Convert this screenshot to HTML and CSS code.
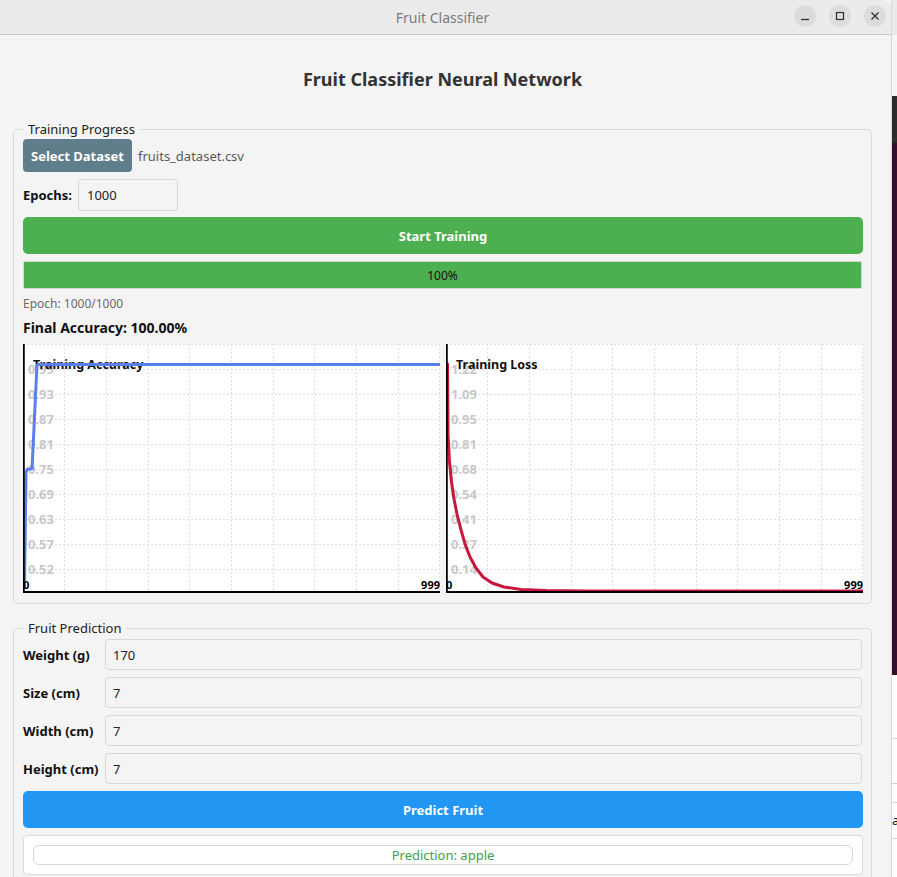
FILE: index.html
```html
<!DOCTYPE html>
<html>
<head>
<meta charset="utf-8">
<title>Fruit Classifier</title>
<link rel="stylesheet" href="styles.css">
</head>
<body>
<div class="desktop">
  <div class="window">
    <header class="titlebar">
      <span class="title">Fruit Classifier</span>
      <div class="controls">
        <span class="ctl"><svg width="22" height="22" viewBox="0 0 22 22"><path d="M7 14.5h8" stroke="#2e2e2e" stroke-width="1.3" fill="none"/></svg></span>
        <span class="ctl"><svg width="22" height="22" viewBox="0 0 22 22"><rect x="7.5" y="7.5" width="7" height="7" stroke="#2e2e2e" stroke-width="1.2" fill="none"/></svg></span>
        <span class="ctl"><svg width="22" height="22" viewBox="0 0 22 22"><path d="M7.5 7.5l7 7M14.5 7.5l-7 7" stroke="#2e2e2e" stroke-width="1.2" fill="none"/></svg></span>
      </div>
    </header>
    <main class="content">
      <h1 class="heading">Fruit Classifier Neural Network</h1>

      <fieldset class="group training">
        <legend class="group-title">Training Progress</legend>
        <div class="dataset-row">
          <button class="btn btn-slate">Select Dataset</button>
          <span class="filename">fruits_dataset.csv</span>
        </div>
        <div class="epochs-row">
          <span class="field-label">Epochs:</span>
          <div class="input epochs-input">1000</div>
        </div>
        <button class="btn btn-green btn-wide">Start Training</button>
        <div class="progress"><span>100%</span></div>
        <div class="epoch-text">Epoch: 1000/1000</div>
        <div class="final-acc">Final Accuracy: 100.00%</div>
        <div class="charts">
          <svg class="chart" width="417" height="249" viewBox="0 0 417 249">
            <rect width="417" height="249" fill="#ffffff"/>
            <path class="grid" d="M0 0.5H417M0 25.5H417M0 50.5H417M0 75.5H417M0 100.5H417M0 125.5H417M0 150.5H417M0 175.5H417M0 200.5H417M0 225.5H417M41.5 0V249M83.5 0V249M125.5 0V249M166.5 0V249M208.5 0V249M250.5 0V249M291.5 0V249M333.5 0V249M375.5 0V249M416.5 0V249"/>
            <g class="ylab">
              <text x="5" y="25">0.99</text>
              <text x="5" y="50">0.93</text>
              <text x="5" y="75">0.87</text>
              <text x="5" y="100">0.81</text>
              <text x="5" y="125">0.75</text>
              <text x="5" y="150">0.69</text>
              <text x="5" y="175">0.63</text>
              <text x="5" y="200">0.57</text>
              <text x="5" y="225">0.52</text>
            </g>
            <text class="ctitle" x="10" y="20">Training Accuracy</text>
            <path class="curve-acc" d="M1.5 245L3 128L4.5 125L9 125L14 21L15 20.5H417"/>
            <path class="axis" d="M0.75 0V249M0 248H417"/>
            <text class="xlab" x="0" y="240">0</text>
            <text class="xlab" x="417" y="240" text-anchor="end">999</text>
          </svg>
          <svg class="chart" width="417" height="249" viewBox="0 0 417 249">
            <rect width="417" height="249" fill="#ffffff"/>
            <path class="grid" d="M0 0.5H417M0 25.5H417M0 50.5H417M0 75.5H417M0 100.5H417M0 125.5H417M0 150.5H417M0 175.5H417M0 200.5H417M0 225.5H417M41.5 0V249M83.5 0V249M125.5 0V249M166.5 0V249M208.5 0V249M250.5 0V249M291.5 0V249M333.5 0V249M375.5 0V249M416.5 0V249"/>
            <g class="ylab">
              <text x="5" y="25">1.22</text>
              <text x="5" y="50">1.09</text>
              <text x="5" y="75">0.95</text>
              <text x="5" y="100">0.81</text>
              <text x="5" y="125">0.68</text>
              <text x="5" y="150">0.54</text>
              <text x="5" y="175">0.41</text>
              <text x="5" y="200">0.27</text>
              <text x="5" y="225">0.14</text>
            </g>
            <text class="ctitle" x="10" y="20">Training Loss</text>
            <path class="curve-loss" d="M1.5 20L2 90L3.5 118L5.5 138L8 155L11 170L14.5 184L19 200L24 213L30 224L37 233L46 239L58 243L75 245.5L100 246.5L140 247L417 247"/>
            <path class="axis" d="M0.75 0V249M0 248H417"/>
            <text class="xlab" x="0" y="240">0</text>
            <text class="xlab" x="417" y="240" text-anchor="end">999</text>
          </svg>
        </div>
      </fieldset>

      <fieldset class="group prediction">
        <legend class="group-title">Fruit Prediction</legend>
        <div class="form-grid">
          <span class="field-label">Weight (g)</span>
          <div class="input">170</div>
          <span class="field-label">Size (cm)</span>
          <div class="input">7</div>
          <span class="field-label">Width (cm)</span>
          <div class="input">7</div>
          <span class="field-label">Height (cm)</span>
          <div class="input">7</div>
        </div>
        <button class="btn btn-blue btn-wide">Predict Fruit</button>
        <div class="result">
          <div class="result-label">Prediction: apple</div>
        </div>
      </fieldset>
    </main>
  </div>
  <div class="side">
    <div class="side-top"></div>
    <div class="side-light"></div>
    <div class="side-dark"></div>
    <div class="side-purple"></div>
    <div class="side-white">
      <div class="side-line l1"></div>
      <div class="side-line l2"></div>
      <div class="side-line l3"></div>
      <span class="side-a">a</span>
      <div class="side-line l4"></div>
    </div>
  </div>
</div>
</body>
</html>
```

FILE: styles.css
```css
* { box-sizing: border-box; }
html, body { margin: 0; padding: 0; }
body {
  width: 897px;
  height: 877px;
  overflow: hidden;
  font-family: "Noto Sans", "Open Sans", sans-serif;
  background: #f4f4f4;
  color: #1a1a1a;
}
.desktop { display: flex; height: 877px; }
.window {
  width: 892px;
  flex: none;
  background: #f4f4f4;
  display: flex;
  flex-direction: column;
  border-right: 1px solid #d8d8d8;
}
.titlebar {
  height: 35px;
  flex: none;
  background: #ebebeb;
  border-bottom: 1px solid #c9c9c9;
  display: grid;
  grid-template-columns: 1fr auto 1fr;
  align-items: center;
  padding-left: 0;
  border-top-right-radius: 10px;
}
.title {
  grid-column: 2;
  font-size: 14px;
  color: #7a7a7a;
  margin-left: -6px;
}
.controls {
  grid-column: 3;
  justify-self: end;
  display: flex;
  gap: 13px;
  padding-right: 5px;
  margin-top: -2px;
}
.ctl {
  width: 22px;
  height: 22px;
  border-radius: 50%;
  background: #dcdcdc;
  display: flex;
}
.content {
  flex: 1;
  padding: 0 19px 0 13px;
}
.heading {
  margin: 0;
  padding-top: 32px;
  font-size: 18px;
  line-height: 24px;
  font-weight: 700;
  text-align: center;
  color: #333333;
}
.group {
  margin: 29px 0 0 0;
  border: 1px solid #d9d9d9;
  border-radius: 5px;
  padding: 1px 8px 9px 9px;
  display: flex;
  flex-direction: column;
  min-width: 0;
}
.training { padding-bottom: 10px; }
.group-title {
  padding: 0 5px;
  margin-left: 0;
  font-size: 13px;
  line-height: 18px;
  color: #222222;
}
.prediction { margin-top: 15px; padding-top: 2px; }

.btn {
  border: none;
  font-family: inherit;
  font-weight: 700;
  font-size: 13px;
  color: #ffffff;
  cursor: pointer;
}
.btn-slate {
  background: #607d8b;
  height: 33px;
  padding: 0 8px;
  border-radius: 4px;
}
.btn-green { background: #4caf50; }
.btn-blue { background: #2196f3; }
.btn-wide {
  height: 37px;
  border-radius: 5px;
  width: 100%;
}
.dataset-row { display: flex; align-items: center; }
.filename { margin-left: 6px; font-size: 13px; color: #5a5a5a; }
.epochs-row { display: flex; align-items: center; margin-top: 7px; }
.field-label { font-size: 13px; font-weight: 700; color: #111111; }
.input {
  height: 32px;
  border: 1px solid #d8d8d8;
  border-radius: 3px;
  background: #f4f4f4;
  font-size: 13px;
  color: #222222;
  display: flex;
  align-items: center;
  padding-left: 8px;
}
.epochs-input { width: 100px; margin-left: 6px; }
.training .btn-wide { margin-top: 6px; }
.progress {
  margin-top: 7px;
  margin-right: 1px;
  height: 28px;
  background: #4caf50;
  border: 1px solid #d6d6d6;
  border-radius: 2px;
  display: flex;
  align-items: center;
  justify-content: center;
  font-size: 12px;
  color: #111111;
}
.epoch-text {
  margin-top: 6px;
  font-size: 12px;
  line-height: 17px;
  color: #6a6a6a;
}
.final-acc {
  margin-top: 6px;
  font-size: 14px;
  line-height: 20px;
  font-weight: 700;
  color: #111111;
}
.charts {
  margin-top: 6px;
  display: flex;
  gap: 6px;
  height: 249px;
}
.chart { display: block; flex: none; }
.grid { stroke: #e0e0e0; stroke-width: 1; stroke-dasharray: 2 2; fill: none; }
.ylab text {
  font-family: "Noto Sans", sans-serif;
  font-size: 13px;
  font-weight: 700;
  fill: #c8c8c8;
  dominant-baseline: central;
}
.ctitle {
  font-family: "Noto Sans", sans-serif;
  font-size: 12.5px;
  font-weight: 700;
  fill: #111111;
  dominant-baseline: central;
}
.xlab {
  font-family: "Noto Sans", sans-serif;
  font-size: 11px;
  font-weight: 700;
  fill: #000000;
  dominant-baseline: central;
}
.axis { stroke: #000000; stroke-width: 2; fill: none; }
.curve-acc { stroke: #5a7fec; stroke-width: 3; fill: none; stroke-linejoin: round; }
.curve-loss { stroke: #c8163c; stroke-width: 3; fill: none; stroke-linejoin: round; stroke-linecap: round; }

.form-grid {
  display: grid;
  grid-template-columns: 76px 1fr;
  column-gap: 6px;
  row-gap: 7px;
  align-items: center;
  margin-right: 1px;
}
.form-grid .input { height: 31px; border-radius: 4px; padding-left: 7px; }
.prediction .btn-wide { margin-top: 7px; }
.result {
  margin-top: 7px;
  height: 40px;
  background: #ffffff;
  border: 1px solid #dadada;
  border-radius: 4px;
  padding: 9px;
}
.result-label {
  height: 20px;
  border: 1px solid #d8d8d8;
  border-radius: 6px;
  display: flex;
  align-items: center;
  justify-content: center;
  font-size: 13px;
  color: #43a047;
}

.side { flex: 1; display: flex; flex-direction: column; }
.side-top { height: 35px; background: #ebebeb; }
.side-light { height: 61px; background: #f6f6f6; }
.side-dark { height: 47px; background: #2d2d2d; }
.side-purple { height: 532px; background: #3a0d2c; }
.side-white { flex: 1; background: #ffffff; display: flex; flex-direction: column; }
.side-line { height: 1px; background: #cfcfcf; }
.l1 { margin-top: 63px; }
.l2 { margin-top: 44px; }
.l3 { margin-top: 18px; }
.side-a { font-size: 13px; line-height: 16px; margin-top: 9px; color: #111; }
.l4 { margin-top: 10px; }
```
